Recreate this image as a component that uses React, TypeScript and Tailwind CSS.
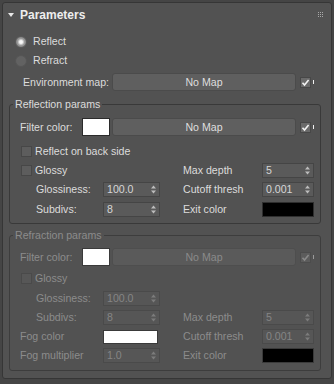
import React from "react";

function Check({ disabled }: { disabled?: boolean }) {
  return (
    <div className="flex items-center">
      <div
        className={
          "w-[11px] h-[11px] border flex items-center justify-center " +
          (disabled ? "bg-[#5c5c5c] border-[#4c4c4c]" : "bg-[#6a6a6a] border-[#474747]")
        }
      >
        <svg width="9" height="9" viewBox="0 0 9 9">
          <path d="M1.5 4.8 L3.5 7 L7.6 2" fill="none" stroke={disabled ? "#8a8a8a" : "#f2f2f2"} strokeWidth="1.6" />
        </svg>
      </div>
      <div className={"ml-[2px] w-[1px] h-[4px] " + (disabled ? "bg-[#9a9a9a]" : "bg-[#f0f0f0]")} />
    </div>
  );
}

function Box({ disabled }: { disabled?: boolean }) {
  return (
    <div
      className={
        "w-[11px] h-[11px] shrink-0 border " +
        (disabled ? "bg-[#575757] border-[#4a4a4a]" : "bg-[#5d5d5d] border-[#474747]")
      }
    />
  );
}

function Arrows({ disabled }: { disabled?: boolean }) {
  const c = disabled ? "#7c7c7c" : "#bdbdbd";
  return (
    <svg width="5" height="9" viewBox="0 0 5 9">
      <path d="M0 3.5 L2.5 0.5 L5 3.5 Z" fill={c} />
      <path d="M0 5.5 L2.5 8.5 L5 5.5 Z" fill={c} />
    </svg>
  );
}

function Spinner({ value, wide, disabled }: { value: string; wide?: boolean; disabled?: boolean }) {
  return (
    <div
      className={
        (wide ? "w-[57px] " : "w-[52px] ") +
        "h-[15px] shrink-0 border flex items-center justify-between pl-[3px] pr-[3px] " +
        (disabled
          ? "bg-[#565656] border-[#4a4a4a] text-[#858585]"
          : "bg-[#5a5a5a] border-[#454545] text-[#d6d6d6]")
      }
    >
      <span className="leading-[13px]">{value}</span>
      <Arrows disabled={disabled} />
    </div>
  );
}

function MapButton({ disabled }: { disabled?: boolean }) {
  return (
    <div
      className={
        "w-[184px] h-[18px] shrink-0 rounded-[3px] border flex items-center justify-center " +
        (disabled
          ? "bg-[#5a5a5a] border-[#4e4e4e] text-[#8a8a8a]"
          : "bg-[#5f5f5f] border-[#4b4b4b] text-[#dedede]")
      }
    >
      No Map
    </div>
  );
}

export default function App() {
  const dim = "text-[#8c8c8c]";
  return (
    <div className="w-[334px] h-[384px] bg-[#454545] pt-[2px] pl-[2px] font-['Liberation_Sans',Arial,sans-serif] text-[10.6px] text-[#dcdcdc] leading-none whitespace-nowrap">
      <div className="w-[330px] h-[377px] bg-[#525252] border border-[#363636] rounded-[3px]">
        {/* header */}
        <div className="h-[23px] flex items-center pl-[5px] pr-[8px]">
          <svg width="6" height="4" viewBox="0 0 6 4">
            <path d="M0 0 H6 L3 4 Z" fill="#e8e8e8" />
          </svg>
          <span className="ml-[6px] text-[12px] font-bold text-[#eeeeee]">Parameters</span>
          <div className="flex-1" />
          <svg width="5" height="5" viewBox="0 0 5 5">
            {[0, 2, 4].map((y) =>
              [0, 2, 4].map((x) => <rect key={x + "-" + y} x={x} y={y} width="1" height="1" fill="#a8a8a8" />)
            )}
          </svg>
        </div>

        {/* radios */}
        <div className="mt-[6px] h-[19px] flex items-center pl-[12px]">
          <div className="w-[12px] h-[12px] rounded-full border border-[#5a5a5a] bg-[radial-gradient(circle,#ffffff_0%,#f0f0f0_22%,#9a9a9a_50%,#6c6c6c_100%)]" />
          <span className="ml-[6px]">Reflect</span>
        </div>
        <div className="h-[19px] flex items-center pl-[12px]">
          <div className="w-[12px] h-[12px] rounded-full border border-[#555555] bg-[#626262]" />
          <span className="ml-[6px]">Refract</span>
        </div>

        {/* environment map */}
        <div className="mt-[3px] h-[18px] flex items-center pl-[20px]">
          <span className="w-[89px] shrink-0">Environment map:</span>
          <MapButton />
          <div className="ml-[4px]">
            <Check />
          </div>
        </div>

        {/* Reflection params */}
        <div className="mt-[13px] ml-[6px] w-[312px] border border-[#393939] rounded-[3px] relative pb-[4px]">
          <span className="absolute top-[-7px] left-[3px] px-[2px] bg-[#525252] leading-[13px]">Reflection params</span>
          <div className="mt-[13px] h-[18px] flex items-center pl-[10px]">
            <span className="w-[62px] shrink-0">Filter color:</span>
            <div className="w-[28px] h-[18px] shrink-0 bg-white border border-[#2b2b2b]" />
            <div className="ml-[2px]">
              <MapButton />
            </div>
            <div className="ml-[4px]">
              <Check />
            </div>
          </div>
          <div className="mt-[6px] h-[19px] flex items-center pl-[11px]">
            <Box />
            <span className="ml-[3px]">Reflect on back side</span>
          </div>
          <div className="h-[19px] flex items-center">
            <div className="w-[173px] shrink-0 flex items-center pl-[11px]">
              <Box />
              <span className="ml-[3px]">Glossy</span>
            </div>
            <span className="w-[79px] shrink-0">Max depth</span>
            <Spinner value="5" />
          </div>
          <div className="h-[19px] flex items-center">
            <div className="w-[173px] shrink-0 flex items-center pl-[26px]">
              <span className="w-[67px] shrink-0">Glossiness:</span>
              <Spinner value="100.0" wide />
            </div>
            <span className="w-[79px] shrink-0">Cutoff thresh</span>
            <Spinner value="0.001" />
          </div>
          <div className="h-[20px] flex items-center">
            <div className="w-[173px] shrink-0 flex items-center pl-[26px]">
              <span className="w-[67px] shrink-0">Subdivs:</span>
              <Spinner value="8" wide />
            </div>
            <span className="w-[79px] shrink-0">Exit color</span>
            <div className="w-[52px] h-[15px] shrink-0 bg-black border border-[#2e2e2e]" />
          </div>
        </div>

        {/* Refraction params */}
        <div className={"mt-[11px] ml-[6px] w-[312px] border border-[#3d3d3d] rounded-[3px] relative pb-[5px] " + dim}>
          <span className="absolute top-[-7px] left-[3px] px-[2px] bg-[#525252] leading-[13px]">Refraction params</span>
          <div className="mt-[12px] h-[18px] flex items-center pl-[10px]">
            <span className="w-[62px] shrink-0">Filter color:</span>
            <div className="w-[28px] h-[18px] shrink-0 bg-white border border-[#3a3a3a]" />
            <div className="ml-[2px]">
              <MapButton disabled />
            </div>
            <div className="ml-[4px]">
              <Check disabled />
            </div>
          </div>
          <div className="mt-[3px] h-[19px] flex items-center pl-[11px]">
            <Box disabled />
            <span className="ml-[3px]">Glossy</span>
          </div>
          <div className="h-[20px] flex items-center">
            <div className="w-[173px] shrink-0 flex items-center pl-[26px]">
              <span className="w-[67px] shrink-0">Glossiness:</span>
              <Spinner value="100.0" wide disabled />
            </div>
          </div>
          <div className="h-[19px] flex items-center">
            <div className="w-[173px] shrink-0 flex items-center pl-[26px]">
              <span className="w-[67px] shrink-0">Subdivs:</span>
              <Spinner value="8" wide disabled />
            </div>
            <span className="w-[79px] shrink-0">Max depth</span>
            <Spinner value="5" disabled />
          </div>
          <div className="h-[19px] flex items-center">
            <div className="w-[173px] shrink-0 flex items-center pl-[10px]">
              <span className="w-[83px] shrink-0">Fog color</span>
              <div className="w-[55px] h-[14px] shrink-0 bg-white border border-[#3a3a3a]" />
            </div>
            <span className="w-[79px] shrink-0">Cutoff thresh</span>
            <Spinner value="0.001" disabled />
          </div>
          <div className="h-[19px] flex items-center">
            <div className="w-[173px] shrink-0 flex items-center pl-[10px]">
              <span className="w-[83px] shrink-0">Fog multiplier</span>
              <Spinner value="1.0" wide disabled />
            </div>
            <span className="w-[79px] shrink-0">Exit color</span>
            <div className="w-[52px] h-[15px] shrink-0 bg-black border border-[#3a3a3a]" />
          </div>
        </div>
      </div>
    </div>
  );
}
